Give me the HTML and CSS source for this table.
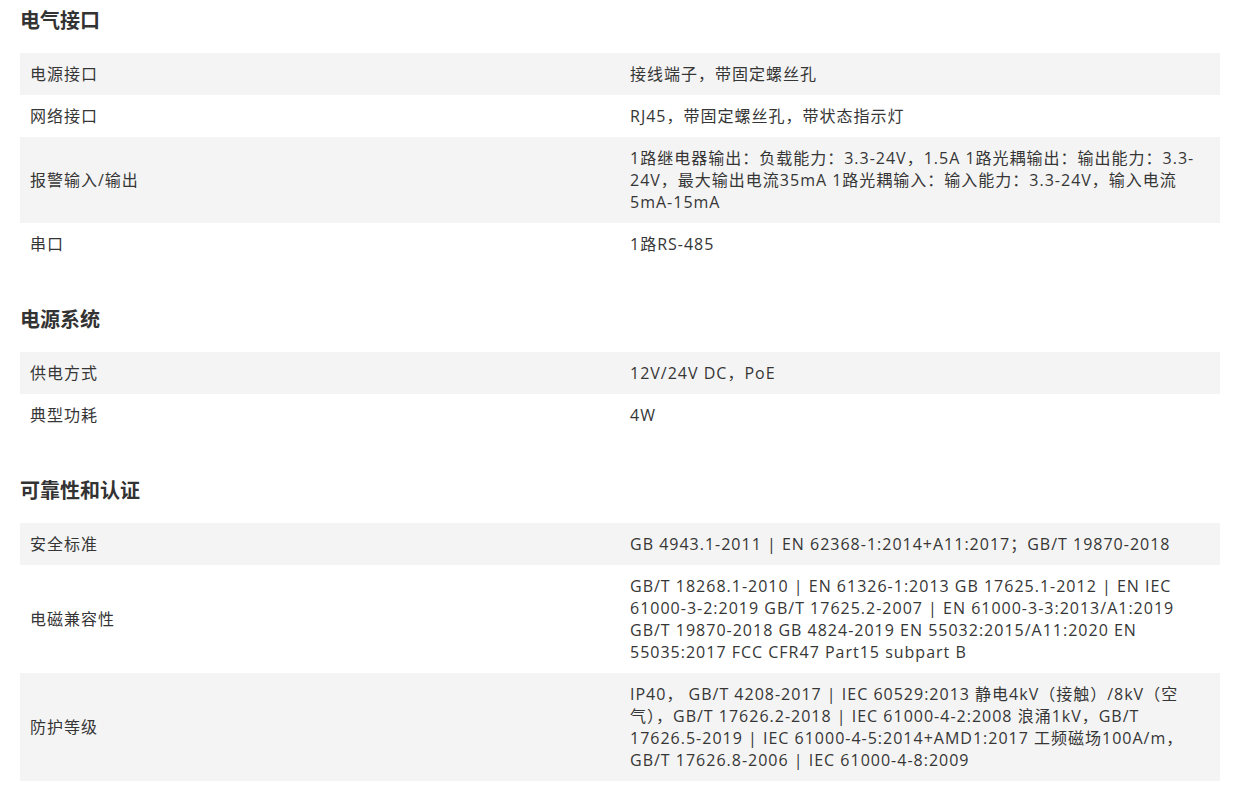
FILE: index.html
```html
<!DOCTYPE html>
<html lang="zh-CN">
<head>
<meta charset="utf-8">
<title>规格参数</title>
<link rel="stylesheet" href="styles.css">
</head>
<body>
<div class="page">
  <section class="spec">
    <h2 class="spec-title">电气接口</h2>
    <table class="spec-table">
      <tr><td class="k">电源接口</td><td class="v">接线端子，带固定螺丝孔</td></tr>
      <tr><td class="k">网络接口</td><td class="v">RJ45，带固定螺丝孔，带状态指示灯</td></tr>
      <tr><td class="k">报警输入/输出</td><td class="v">1路继电器输出：负载能力：3.3-24V，1.5A 1路光耦输出：输出能力：3.3-24V，最大输出电流35mA 1路光耦输入：输入能力：3.3-24V，输入电流5mA-15mA</td></tr>
      <tr><td class="k">串口</td><td class="v">1路RS-485</td></tr>
    </table>
  </section>
  <section class="spec">
    <h2 class="spec-title">电源系统</h2>
    <table class="spec-table">
      <tr><td class="k">供电方式</td><td class="v">12V/24V DC，PoE</td></tr>
      <tr><td class="k">典型功耗</td><td class="v">4W</td></tr>
    </table>
  </section>
  <section class="spec">
    <h2 class="spec-title">可靠性和认证</h2>
    <table class="spec-table">
      <tr><td class="k">安全标准</td><td class="v">GB 4943.1-2011 | EN 62368-1:2014+A11:2017；GB/T 19870-2018</td></tr>
      <tr><td class="k">电磁兼容性</td><td class="v">GB/T 18268.1-2010 | EN 61326-1:2013 GB 17625.1-2012 | EN IEC 61000-3-2:2019 GB/T 17625.2-2007 | EN 61000-3-3:2013/A1:2019 GB/T 19870-2018 GB 4824-2019 EN 55032:2015/A11:2020 EN 55035:2017 FCC CFR47 Part15 subpart B</td></tr>
      <tr><td class="k">防护等级</td><td class="v">IP40， GB/T 4208-2017 | IEC 60529:2013 静电4kV（接触）/8kV（空气），GB/T 17626.2-2018 | IEC 61000-4-2:2008 浪涌1kV，GB/T 17626.5-2019 | IEC 61000-4-5:2014+AMD1:2017 工频磁场100A/m，GB/T 17626.8-2006 | IEC 61000-4-8:2009</td></tr>
    </table>
  </section>
</div>
</body>
</html>
```

FILE: styles.css
```css
* { box-sizing: border-box; }
html, body { margin: 0; padding: 0; background: #fff; }
body {
  font-family: "Open Sans", "Noto Sans CJK SC", sans-serif;
  color: #363636;
}
.page { padding: 5px 26px 0 20px; }
.spec { margin-bottom: 39px; }
.spec-title {
  margin: 0 0 18px;
  font-family: "Noto Sans CJK SC", sans-serif;
  font-size: 20px;
  line-height: 30px;
  font-weight: 700;
  color: #333;
}
.spec-table {
  width: 100%;
  border-collapse: collapse;
  table-layout: fixed;
}
.spec-table tr:nth-child(odd) { background: #f4f4f4; }
.spec-table td {
  padding: 10px 10px;
  font-size: 16px;
  line-height: 22px;
  letter-spacing: 1px;
  vertical-align: middle;
}
.spec-table td.k { width: 50%; }
.spec-table td.v { padding-right: 16px; }
```
